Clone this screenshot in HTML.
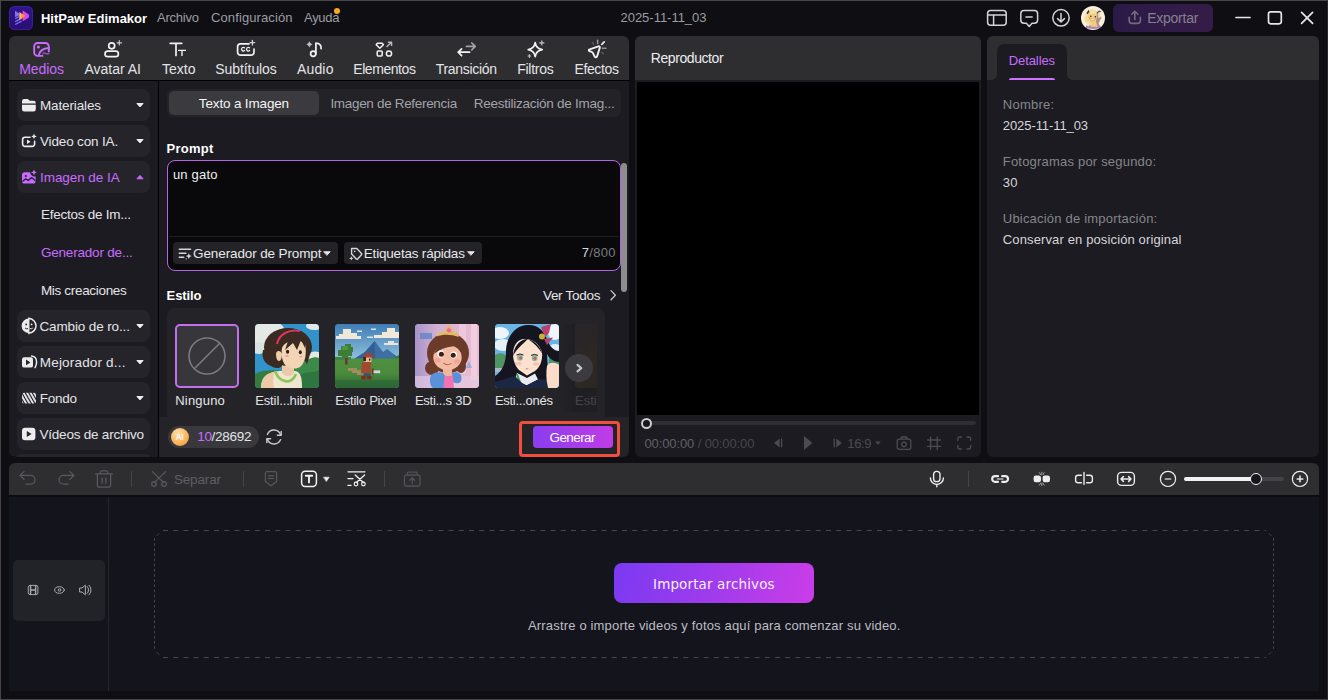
<!DOCTYPE html>
<html lang="es">
<head>
<meta charset="utf-8">
<title>HitPaw Edimakor</title>
<style>
*{box-sizing:border-box;margin:0;padding:0}
html,body{width:1328px;height:700px;overflow:hidden;background:#0f0e13}
body{position:relative;font-family:"Liberation Sans","DejaVu Sans",sans-serif;font-size:14px;color:#e4e4e8}
.a{position:absolute}
.t{position:absolute;white-space:nowrap;line-height:20px;height:20px}
.c{transform:translateX(-50%)}
.g{color:#9c9ca2}
.p{color:#c76bff}
.b{font-weight:bold}
svg{position:absolute;overflow:visible}
.frame{left:0;top:0;width:1328px;height:700px;border:1px solid #47474b;border-right-color:#2a2a2e;pointer-events:none}
.hd{background:#2e2e31}
.bd{background:#1c1b21}
.item{left:17px;width:133px;height:32px;border-radius:8px;background:#25242a}
</style>
</head>
<body>
<!-- TITLE BAR -->
<div id="titlebar">
  <div class="a" style="left:9px;top:6px;width:24px;height:24px;border-radius:5.5px;background:linear-gradient(180deg,#30178c,#280f70);box-shadow:inset 0 0 0 1px rgba(72,40,190,.55)"></div>
  <svg id="logo" style="left:0;top:0" width="40" height="36" viewBox="0 0 40 36">
    <defs>
      <linearGradient id="lgo" x1="0" x2="1" y1="0" y2="0"><stop offset="0" stop-color="#ffc94a"/><stop offset="1" stop-color="#ff7a1a"/></linearGradient>
      <linearGradient id="lgm" x1="0" x2="1" y1="0" y2="0"><stop offset="0" stop-color="#ff45d0"/><stop offset="1" stop-color="#b04bff"/></linearGradient>
    </defs>
    <path d="M15 10.800 L19.300 13.400 V15.600 L15 17z" fill="#8470ff"/>
    <path d="M15.200 18.700 L19.200 16.600 M15.200 21.600 L21.600 18.300 M15.200 24.500 L21.600 21.200" stroke="#7d6bff" stroke-width="1.400" fill="none"/>
    <path d="M22.600 10.600 L29 14.400 V17.600 L22.600 21.200z" fill="url(#lgm)"/>
    <path d="M19.300 12 L25.400 16 L19.300 20z" fill="url(#lgo)"/>
  </svg>
  <div class="t b" style="left:40.9px;top:8.500px;font-size:13px;color:#fff">HitPaw Edimakor</div>
  <div class="t g" style="left:157px;top:8px;font-size:13px;letter-spacing:-0.23px">Archivo</div>
  <div class="t g" style="left:211px;top:8px;font-size:13px;letter-spacing:0.11px">Configuración</div>
  <div class="t g" style="left:304px;top:8px;font-size:13px;letter-spacing:-0.29px">Ayuda</div>
  <div class="a" style="left:333.7px;top:7.800px;width:6px;height:6px;border-radius:3px;background:#f7a823"></div>
  <div class="t g c" style="left:663.49px;top:8px;font-size:13px;letter-spacing:-0.02px">2025-11-11_03</div>
  <div class="a" style="left:1113px;top:4px;width:100px;height:28px;border-radius:6px;background:linear-gradient(100deg,#2a1a47,#361c48)"></div>
  <div class="t" style="left:1147.2px;top:8px;font-size:14px;color:#87808f;letter-spacing:-0.25px">Exportar</div>
  <div class="a" style="left:1080.800px;top:5.600px;width:24.400px;height:24.400px;border-radius:12.200px;overflow:hidden;background:#f7f0dc">
    <svg width="24.400" height="24.400" viewBox="1080.800 5.600 24.400 24.400" style="left:0;top:0">
      <circle cx="1092.500" cy="17" r="8.200" fill="#f6dc9c" opacity="0.850"/>
      <circle cx="1088" cy="19" r="3.500" fill="#f5d88e" opacity="0.700"/>
      <path d="M1085 27.600 l1.600 -3 1.400 1.400 1 -1.200 8 0.200 1.600 -1 1.800 1.800 0.600 1.800 c-4 1.200 -12 1.200 -16 0z" fill="#9b72b9" opacity="0.850"/>
      <path d="M1088.600 9.400 l-2.200 2.600 0.600 2.200 2.400 -2.400z" fill="#4a3a58"/>
      <path d="M1096.400 12.200 l2.600 -2 2.200 1 -1 0.600 -1.800 -0.200 -0.800 2.600z" fill="#5a3f78"/>
      <path d="M1089 11 l1.600 3 c2 -1 3.600 -1 5.400 -0.400 l1.200 -1 c0.800 2.400 1 4.400 0.400 6.200 l2.600 -1.600 1 1 -2.200 2.400 0.800 0.400 -1.600 1.600 c0.400 1.600 0.200 2.800 -0.600 3.800 h-6.600 c-1 -1.400 -1.200 -3 -0.400 -4.800 c-2.200 -1.400 -3.200 -3.600 -2.800 -6z" fill="#f2ce78"/>
      <path d="M1096.400 13 c0.600 2.400 0.400 5 -0.600 8 l1.200 4.400 1.200 0.200 c0.600 -1 0.600 -2.400 0.200 -3.800 l1.600 -1.600 -0.800 -0.400 2.200 -2.400 -1 -1 -2.600 1.600 c0.400 -1.800 0.200 -3.600 -0.400 -5.600z" fill="#7a5a9a" opacity="0.550"/>
      <circle cx="1090.600" cy="15.800" r="0.800" fill="#2e2430"/>
      <circle cx="1095.200" cy="16.400" r="0.800" fill="#2e2430"/>
      <circle cx="1089.400" cy="17.800" r="0.800" fill="#ee8a4a"/>
      <circle cx="1095.800" cy="18.400" r="0.800" fill="#ee8a4a"/>
      <path d="M1090.600 18.400 h4 v1.800 h-4z" fill="#f6ecd2" stroke="#8a6a6a" stroke-width="0.300"/>
    </svg>
  </div>
  <svg id="tbicons" style="left:0;top:0" width="1328" height="36" viewBox="0 0 1328 36" fill="none" stroke="#d3d3d7" stroke-width="1.500" stroke-linecap="round" stroke-linejoin="round">
    <rect x="987.600" y="10.600" width="18.600" height="14.600" rx="3"/>
    <path d="M987.600 14.900 H1006.200 M993.600 14.900 V25.200"/>
    <path d="M1024 10.500 h10.400 a3.200 3.200 0 0 1 3.200 3.200 v6.400 a3.200 3.200 0 0 1 -3.200 3.200 h-2.400 l-2.800 3.200 -2.800 -3.200 h-2.400 a3.200 3.200 0 0 1 -3.200 -3.200 v-6.400 a3.200 3.200 0 0 1 3.200 -3.200z"/>
    <path d="M1026 17 h6.200"/>
    <circle cx="1061" cy="17.800" r="8.200"/>
    <path d="M1061 13.400 v8.400 M1057.600 18.600 l3.400 3.400 3.400 -3.400"/>
    <g stroke="#736c7c" stroke-width="1.600">
      <path d="M1134.800 19.400 v-8 M1131.800 14.200 l3 -3 3 3"/>
      <path d="M1129.200 17.200 v3.200 a3 3 0 0 0 3 3 h5.200 a3 3 0 0 0 3 -3 v-3.200"/>
    </g>
    <g stroke="#e6e6ea" stroke-width="1.700">
      <path d="M1236 17.500 h14"/>
      <rect x="1268.500" y="11.800" width="12.800" height="12" rx="2.200"/>
      <path d="M1301.600 12.400 l11 11 M1312.600 12.400 l-11 11"/>
    </g>
  </svg>
</div>

<!-- LEFT PANEL -->
<div id="left">
  <div class="a" style="left:9px;top:78px;width:620px;height:379px;background:#000;border-radius:0 0 6px 6px"></div>
  <div class="a hd" style="left:9px;top:36px;width:620px;height:44px;border-radius:6px 6px 0 0"></div>

  <div class="t c p" style="left:41.55px;top:59px;letter-spacing:-0.09px">Medios</div>
  <div class="t c" style="left:112.69px;top:59px;letter-spacing:-0.03px">Avatar AI</div>
  <div class="t c" style="left:178.71px;top:59px;letter-spacing:0.03px">Texto</div>
  <div class="t c" style="left:246.06px;top:59px;letter-spacing:-0.09px">Subtítulos</div>
  <div class="t c" style="left:315.28px;top:59px;letter-spacing:0.17px">Audio</div>
  <div class="t c" style="left:384.38px;top:59px;letter-spacing:-0.44px">Elementos</div>
  <div class="t c" style="left:466.25px;top:59px;letter-spacing:-0.31px">Transición</div>
  <div class="t c" style="left:535.38px;top:59px;letter-spacing:-0.24px">Filtros</div>
  <div class="t c" style="left:596.53px;top:59px;letter-spacing:-0.35px">Efectos</div>
  <svg id="tabicons" style="left:0;top:0" width="1328" height="100" viewBox="0 0 1328 100" fill="none" stroke="#f2f2f4" stroke-width="1.7" stroke-linecap="round" stroke-linejoin="round">
    <!-- Medios -->
    <g stroke="#c76bff" stroke-width="1.900">
      <path d="M48.800 51.400 V46.500 a3.500 3.500 0 0 0 -3.500 -3.500 H37.700 a3.500 3.500 0 0 0 -3.500 3.500 v5.900 a3.500 3.500 0 0 0 3.500 3.500 H42.500"/>
      <circle cx="38.400" cy="47.100" r="1.500" fill="#c76bff" stroke="none"/>
      <path d="M38.700 55.600 C39.500 51 43 48.300 49 48"/>
      <path d="M42.900 53.700 c1.400 -1 2.500 -0.700 3.300 -0.100 c0.800 0.500 1.700 0.300 2.500 0" stroke-width="1.600" opacity="0.600"/>
    </g>
    <!-- Avatar -->
    <circle cx="111.7" cy="45.8" r="3"/>
    <rect x="105" y="51.2" width="13.4" height="5.4" rx="2.7"/>
    <path d="M119.3 40.6 v4.4 M117.1 42.8 h4.4" stroke-width="1.2" stroke="#c9c9cd"/>
    <!-- Texto -->
    <path d="M170.2 43.3 H181.8 M176 43.3 V55.4"/>
    <path d="M178.6 50.4 H185.4 M182 50.4 V55.4" stroke-width="1.4"/>
    <!-- Subtitulos -->
    <path d="M249 43.8 H240.6 a3 3 0 0 0 -3 3 v5.4 a3 3 0 0 0 3 3 H251 a3 3 0 0 0 3 -3 V49"/>
    <path d="M244.6 47.9 a1.8 1.8 0 1 0 0 2.6 M249.6 47.9 a1.8 1.8 0 1 0 0 2.6" stroke-width="1.2"/>
    <path d="M252.4 40.3 v4.6 M250.1 42.6 h4.6" stroke-width="1.3" stroke="#d4d4d8"/>
    <!-- Audio -->
    <circle cx="313.2" cy="53.8" r="2.6"/>
    <path d="M315.9 53.6 V43.2 c3.5 0 5.6 2 5.2 5.4"/>
    <path d="M309.4 41.2 l1.1 2 2 1.1 -2 1.1 -1.1 2 -1.1 -2 -2 -1.1 2 -1.1z" fill="#c2c2c6" stroke="none"/>
    <!-- Elementos -->
    <path d="M377.4 43.2 h4.8 l1.2 1.6 -3.6 3.4 -3.6 -3.4z" stroke-width="1.5"/>
    <rect x="377.2" y="51" width="5" height="5" rx="1" stroke-width="1.5"/>
    <circle cx="389" cy="53.5" r="2.6" stroke-width="1.5"/>
    <path d="M387 46.6 l4.6 -4.4 M388.4 42.2 h3.2 v3.2" stroke="#b9b9be" stroke-width="1.4"/>
    <!-- Transicion -->
    <path d="M466.5 46.4 H475.2 M471.8 43 l3.4 3.4 -3.4 3.4" stroke="#a2a2a7"/>
    <path d="M469.6 52.2 H458.2 M461.6 48.8 l-3.400 3.400 3.400 3.400"/>
    <!-- Filtros -->
    <path d="M535.2 42.6 c0.7 4.4 2.6 6.3 7 7 c-4.4 0.7 -6.3 2.6 -7 7 c-0.7 -4.4 -2.6 -6.300 -7 -7 c4.400 -0.7 6.3 -2.6 7 -7z"/>
    <path d="M541.8 40.8 v4.200 M539.7 42.9 h4.200" stroke-width="1.2" stroke="#c4c4c8"/>
    <path d="M529.4 54.600 v2.800 M528 56 h2.800" stroke-width="1.100" stroke="#c4c4c8"/>
    <!-- Efectos -->
    <path d="M589.7 49.3 L598.4 46.4 c1 -0.3 1.7 0.4 1.4 1.4 L597.1 56.3 c-0.4 1.2 -1.8 1.400 -2.400 0.300 L593 53.1 c-0.3 -0.6 -0.8 -1 -1.4 -1.2 l-2.100 -0.800 c-1.100 -0.400 -1 -1.500 0.200 -1.800z" stroke-width="1.900"/>
    <path d="M597.6 40.3 v3.300" stroke-width="1.500" stroke="#9c9ca1"/>
    <path d="M604.2 41.9 l-2.400 2.400" stroke-width="1.800" stroke="#e6e6ea"/>
    <path d="M602.2 48.2 h3.800" stroke-width="1.500" stroke="#8f8f94"/>
    <path d="M592.4 42.500 l1.400 1.800 M601.8 52.300 l1.800 1.400" stroke-width="1.300" stroke="#5c5c61"/>
  </svg>
  <div class="a bd" style="left:9px;top:81px;width:149px;height:376px;border-radius:0 0 0 6px"></div>
  <div class="a bd" style="left:159px;top:81px;width:470px;height:376px;border-radius:0 0 6px 0"></div>
  <div id="sidebar">
    <div class="a item" style="top:89px"></div>
    <div class="a item" style="top:125px"></div>
    <div class="a item" style="top:161px"></div>
    <div class="a item" style="top:310px"></div>
    <div class="a item" style="top:346px"></div>
    <div class="a item" style="top:382px"></div>
    <div class="a item" style="top:418px"></div>
    <div class="a item" style="top:454px;height:3px;border-radius:8px 8px 0 0"></div>
    <div class="t" style="left:40px;top:96px;font-size:13.500px;letter-spacing:-0.14px">Materiales</div>
    <div class="t" style="left:40px;top:132px;font-size:13.500px;letter-spacing:-0.16px">Video con IA.</div>
    <div class="t p" style="left:40px;top:168px;font-size:13.500px;letter-spacing:-0.06px">Imagen de IA</div>
    <div class="t" style="left:40.9px;top:205px;font-size:13.500px;letter-spacing:-0.24px">Efectos de Im...</div>
    <div class="t p" style="left:40.9px;top:243px;font-size:13.500px;letter-spacing:-0.19px">Generador de...</div>
    <div class="t" style="left:40.9px;top:281px;font-size:13.500px;letter-spacing:-0.32px">Mis creaciones</div>
    <div class="t" style="left:39.5px;top:317px;font-size:13.500px;letter-spacing:-0.13px">Cambio de ro...</div>
    <div class="t" style="left:39.8px;top:353px;font-size:13.500px;letter-spacing:0.18px">Mejorador d...</div>
    <div class="t" style="left:39.8px;top:389px;font-size:13.500px;letter-spacing:-0.27px">Fondo</div>
    <div class="t" style="left:39.5px;top:425px;font-size:13.500px;letter-spacing:-0.22px">Vídeos de archivo</div>
    <svg id="sideicons" style="left:0;top:0" width="160" height="460" viewBox="0 0 160 460" fill="#ececee" stroke="none">
      <!-- folder -->
      <path d="M22 101.200 a2.200 2.200 0 0 1 2.200 -2.200 h3.600 l2 1.800 h3.800 a2.200 2.200 0 0 1 2.200 2.200 v0.600 H22z M22 104.800 H35.800 v4.400 a2.200 2.200 0 0 1 -2.200 2.200 H24.200 a2.200 2.200 0 0 1 -2.200 -2.200z"/>
      <!-- carets -->
      <path d="M136.900 103.500 h6.200 l-3.100 3.400z M136.900 139.500 h6.200 l-3.100 3.400z M136.900 324.500 h6.200 l-3.100 3.400z M136.900 360.500 h6.200 l-3.100 3.400z M136.900 396.500 h6.200 l-3.100 3.400z" stroke="#ececee" stroke-width="1" stroke-linejoin="round"/>
      <path d="M136.900 178.800 h6.200 l-3.100 -3.400z" fill="#c76bff" stroke="#c76bff" stroke-width="1" stroke-linejoin="round"/>
      <!-- video AI -->
      <g fill="none" stroke="#ececee" stroke-width="1.600" stroke-linecap="round" stroke-linejoin="round">
        <path d="M30 137.200 H25 a2.400 2.400 0 0 0 -2.400 2.400 v4.400 a2.400 2.400 0 0 0 2.400 2.400 h7.200 a2.400 2.400 0 0 0 2.400 -2.400 V141.400"/>
      </g>
      <path d="M27 139.600 l3.600 2.200 -3.600 2.200z"/>
      <path d="M34 133.600 l0.800 2 2 0.800 -2 0.800 -0.800 2 -0.800 -2 -2 -0.800 2 -0.800z"/>
      <!-- image AI -->
      <g fill="#c76bff">
        <path d="M24.600 172.200 H30 a5 5 0 0 0 4 4.200 l1.600 0 v4.600 a2.600 2.600 0 0 1 -2.600 2.600 H24.600 a2.600 2.600 0 0 1 -2.600 -2.600 v-6.200 a2.600 2.600 0 0 1 2.600 -2.600z"/>
        <path d="M34 169.400 l0.900 2.100 2.100 0.900 -2.100 0.900 -0.900 2.100 -0.900 -2.100 -2.100 -0.900 2.100 -0.900z"/>
      </g>
      <circle cx="25.800" cy="176" r="1.100" fill="#232228"/>
      <path d="M22.400 181.600 l3.400 -2.800 2.400 1.800 3.400 -3 3.800 3.200" fill="none" stroke="#232228" stroke-width="1.300" stroke-linejoin="round"/>
      <!-- face swap -->
      <path d="M28.800 318.600 a7.200 7.200 0 0 0 0 14.400z"/>
      <path d="M28.800 318.600 a7.200 7.200 0 0 1 0 14.400" fill="none" stroke="#ececee" stroke-width="1.500"/>
      <path d="M28.800 317.400 v16.800" stroke="#ececee" stroke-width="1.300"/>
      <circle cx="26.200" cy="324.400" r="0.900" fill="#232228"/>
      <circle cx="31.600" cy="324.400" r="0.900"/>
      <path d="M25 328 q1.600 1.400 3 0.600" fill="none" stroke="#232228" stroke-width="1"/>
      <path d="M29.800 328.600 q1.600 0.600 3 -0.600" fill="none" stroke="#ececee" stroke-width="1"/>
      <!-- enhancer -->
      <path d="M24.200 357.200 h6.600 a2.200 2.200 0 0 1 2.200 2.200 v6 a2.200 2.200 0 0 1 -2.200 2.200 h-6.600 a2.200 2.200 0 0 1 -2.200 -2.200 v-6 a2.200 2.200 0 0 1 2.200 -2.200z M26 359.600 v5.600 l4.400 -2.800z" fill-rule="evenodd"/>
      <path d="M31.600 356 c3.400 0.400 5 3 5 6.200 c0 2 -0.600 3.800 -1.600 5.400" fill="none" stroke="#ececee" stroke-width="1.500" stroke-linecap="round"/>
      <!-- fondo -->
      <clipPath id="fc"><rect x="22" y="392.800" width="14" height="10.600" rx="2"/></clipPath>
      <g fill="none" stroke="#e4e4e8" stroke-width="1.900" clip-path="url(#fc)">
        <path d="M12.0 391 l8 14 M15.5 391 l8 14 M19.0 391 l8 14 M22.5 391 l8 14 M26.0 391 l8 14 M29.5 391 l8 14 M33.0 391 l8 14 M36.5 391 l8 14"/>
      </g>
      <!-- stock video -->
      <path d="M25 427.800 h7.400 a3 3 0 0 1 3 3 v6.400 a3 3 0 0 1 -3 3 h-7.400 a3 3 0 0 1 -3 -3 v-6.400 a3 3 0 0 1 3 -3z M26.800 431 v6 l4.800 -3z" fill-rule="evenodd"/>
    </svg>
  </div>

</div>


  <div id="content">
    <div class="a" style="left:167px;top:89px;width:454px;height:28px;border-radius:6px;background:#232227"></div>
    <div class="a" style="left:169px;top:91px;width:150px;height:24px;border-radius:5px;background:#3b3b3f"></div>
    <div class="t c" style="left:243.92px;top:93.500px;font-size:13.500px;color:#f4f4f6;letter-spacing:-0.16px">Texto a Imagen</div>
    <div class="t c" style="left:393.64px;top:93.500px;font-size:13.500px;color:#a3a3a9;letter-spacing:-0.32px">Imagen de Referencia</div>
    <div class="t c" style="left:544.17px;top:93.500px;font-size:13.500px;color:#a3a3a9;letter-spacing:-0.25px">Reestilización de Imag...</div>
    <div class="t b" style="left:166.6px;top:138.500px;font-size:13px;color:#fff;letter-spacing:0.26px">Prompt</div>
    <div class="a" style="left:167px;top:160px;width:454px;height:110.7px;border-radius:8px;border:1.3px solid #b464e2;background:#09090b"></div>
    <div class="a" style="left:169px;top:236px;width:450px;height:1px;background:#1f1f23"></div>
    <div class="t" style="left:172.9px;top:165px;font-size:13px;color:#eeeef0;letter-spacing:0.22px">un gato</div>
    <div class="a" style="left:173px;top:242px;width:165px;height:22px;border-radius:4px;background:#232327"></div>
    <div class="a" style="left:344px;top:242px;width:138px;height:22px;border-radius:4px;background:#232327"></div>
    <div class="t" style="left:193.1px;top:244px;font-size:13.500px;color:#e8e8ea;letter-spacing:-0.12px">Generador de Prompt</div>
    <div class="t" style="left:363.8px;top:244px;font-size:13.500px;color:#e8e8ea;letter-spacing:-0.2px">Etiquetas rápidas</div>
    <div class="t" style="left:581.8px;top:243px;font-size:13px;color:#7a7a80;letter-spacing:0.26px"><span style="color:#d8d8dc">7</span>/800</div>
    <div class="a" style="left:621.200px;top:162.500px;width:5.600px;height:129.500px;border-radius:3px;background:#8d8d90"></div>
    <div class="t b" style="left:166.6px;top:285.500px;font-size:13px;color:#fff;letter-spacing:-0.12px">Estilo</div>
    <div class="t" style="left:542.9px;top:286px;font-size:13.500px;color:#e6e6e8;letter-spacing:-0.27px">Ver Todos</div>
    <div class="a" style="left:159px;top:416.5px;width:470px;height:40.5px;border-radius:0 0 6px 0;background:#242328"></div>
    <div class="a" style="left:167px;top:308px;width:438px;height:110px;border-radius:8px 8px 0 0;background:#242328"></div>
    <div class="a" style="left:175px;top:324px;width:64px;height:64px;border-radius:5px;border:2px solid #c270f0;background:#37363b"></div>
    <div class="t" style="left:175.3px;top:390.500px;font-size:13px;letter-spacing:0.18px">Ninguno</div>
    <div class="t" style="left:255.2px;top:390.500px;font-size:13px;letter-spacing:-0.12px">Estil...hibli</div>
    <div class="t" style="left:335.3px;top:390.500px;font-size:13px;letter-spacing:-0.22px">Estilo Pixel</div>
    <div class="t" style="left:414.9px;top:390.500px;font-size:13px;letter-spacing:-0.26px">Esti...s 3D</div>
    <div class="t" style="left:494.9px;top:390.500px;font-size:13px;letter-spacing:-0.27px">Esti...onés</div>
    <div class="t" style="left:575px;top:390.500px;font-size:13px;width:22px;overflow:hidden">Esti...</div>

    <div class="a" style="left:255px;top:324px;width:64px;height:64px;border-radius:4px;overflow:hidden;background:#2f93c8">
      <svg width="64" height="64" viewBox="0 0 64 64" style="left:0;top:0">
        <rect width="64" height="64" fill="#3193c9"/>
        <ellipse cx="12" cy="10" rx="19" ry="14" fill="#e4e9e6"/>
        <ellipse cx="4" cy="24" rx="8" ry="6" fill="#d9e2e2"/>
        <ellipse cx="59" cy="2" rx="8" ry="4" fill="#dfe8ea"/>
        <ellipse cx="60" cy="33" rx="8" ry="5.500" fill="#e2e8e6"/>
        <path d="M36 44 C42 36 50 38 54 35 C58 33 62 33 64 34 V64 H36z" fill="#3c8a4a"/>
        <path d="M44 52 C50 46 58 50 64 46 V64 H44z" fill="#2f7540"/>
        <path d="M0 50 C8 45 16 47 24 46 V64 H0z" fill="#357c41"/>
        <path d="M6 64 C6 52 14 48 24 47 H40 C46 48 47 54 47 64z" fill="#efe6d0"/>
        <path d="M6 64 C6 53 12 49 19 48 C18 54 18 60 19 64z" fill="#eccaa7"/>
        <path d="M27 40 h12 v9 c-2 4 -10 4 -12 0z" fill="#eccaa7"/>
        <path d="M20 47 C24 58 36 62 41 50" fill="none" stroke="#8fc458" stroke-width="2.600"/>
        <ellipse cx="33" cy="23" rx="24" ry="19" fill="#3a2a22"/>
        <path d="M8 26 C6 34 10 40 16 42 C22 46 28 44 28 38 V24z" fill="#3a2a22"/>
        <path d="M50 18 c6 4 6 12 2 22 l-4 -6z" fill="#3a2a22"/>
        <path d="M27 24 C30 16 44 14 50 20 C52 30 50 38 46 42 C42 46 34 45 30 41 C27 37 26 30 27 24z" fill="#f3d5b5"/>
        <path d="M21 30 c0 -4 5 -4 6 0 c0 4 -1 7 -3 7 c-2 0 -3 -3 -3 -7z" fill="#efcdaa"/>
        <path d="M34 14 L30 26 L38 19 L42 26 L46 16 L50 24 L50 14z" fill="#3a2a22"/>
        <path d="M22 20 C24 10 34 5 45 7" fill="none" stroke="#d7365e" stroke-width="2"/>
        <ellipse cx="32.600" cy="27.800" rx="1.600" ry="2" fill="#2a1e1c"/>
        <ellipse cx="45.300" cy="28.200" rx="1.500" ry="2" fill="#2a1e1c"/>
        <ellipse cx="32" cy="32" rx="2" ry="1" fill="#f2a3a0"/>
        <ellipse cx="45.800" cy="32.600" rx="1.800" ry="0.900" fill="#f2a3a0"/>
      </svg>
    </div>
    <div class="a" style="left:335px;top:324px;width:64px;height:64px;border-radius:4px;overflow:hidden;background:#4a8fc0">
      <svg width="64" height="64" viewBox="0 0 64 64" style="left:0;top:0">
        <defs><linearGradient id="psky" x1="0" x2="0" y1="0" y2="1"><stop offset="0" stop-color="#3f7db6"/><stop offset="0.550" stop-color="#8fc0dc"/><stop offset="1" stop-color="#8fc0dc"/></linearGradient>
        <linearGradient id="pgr" x1="0" x2="0" y1="0" y2="1"><stop offset="0" stop-color="#4f9040"/><stop offset="0.500" stop-color="#4a8a3c"/><stop offset="1" stop-color="#2c6636"/></linearGradient></defs>
        <rect width="64" height="64" fill="url(#psky)"/>
        <path d="M1 15 h25 v-3 h-4 v-3 h-6 v-4 h-8 v5 h-4 v2 h-3z" fill="#f0e9da"/>
        <path d="M39 14 h25 v-6 h-4 v-4 h-8 v4 h-5 v3 h-8z" fill="#f0e9da"/>
        <path d="M49 21 h14 v-2 h-4 v-2 h-6 v2 h-4z" fill="#e8e4da"/>
        <path d="M22 8 h5 v-1.500 h-5z M36 6 h5 v-1.500 h-5z M32 14 h6 v-1.500 h-6z" fill="#d6e4ea"/>
        <path d="M16 37 L30 28 L39.700 17 L48 28 L52 25 L64 34 V38 H16z" fill="#3f6ea2"/>
        <path d="M16 37 L30 28 L39.700 17 L40 38z" fill="#335f92"/>
        <path d="M54 36 L64 31 V40 H54z" fill="#3a7a45"/>
        <rect y="34.500" width="64" height="29.500" fill="url(#pgr)"/>
        <path d="M0 33 h16 v3 h-16z" fill="#45823f"/>
        <path d="M13 44 h9 v2 h4 v3 h4 v2 h-8 v-2 h-5 v-2 h-4z" fill="#a08c5e"/>
        <rect x="10" y="31" width="2.600" height="9.500" fill="#6a3a2a"/>
        <path d="M3 26 h3 v-4 h4 v-2 h6 v3 h2 v5 h-1 v4 h-4 v2 h-6 v-2 h-4z" fill="#3d7d36"/>
        <path d="M7 22 h6 v4 h-6z" fill="#4f9340"/>
        <path d="M28.400 33.500 v-3 h2 v-1.200 h6 v2 h2.300 v2.200z" fill="#a8402f"/>
        <rect x="29.500" y="33.500" width="7" height="4.600" fill="#e8b890"/>
        <rect x="28.400" y="33" width="2.500" height="4" fill="#2a1c1c"/>
        <rect x="34" y="34.600" width="1.300" height="2" fill="#1c1414"/>
        <path d="M27 38 h9 v11.500 h-9.500 v-8z" fill="#a04a2f"/>
        <rect x="28.500" y="49.500" width="7" height="3" fill="#35507a"/>
        <path d="M26.300 52 h4.500 v3.600 h-4.500z M31.800 52 h4.800 v3.600 h-4.800z" fill="#7a3020"/>
        <rect x="37" y="44.500" width="1.600" height="6" fill="#7a3020"/>
        <rect x="38.600" y="46.400" width="6.600" height="2.800" fill="#cfd6de"/>
        <path d="M0 56 h64 v8 h-64z" fill="#2c6636" opacity="0.600"/>
      </svg>
    </div>
    <div class="a" style="left:415px;top:324px;width:64px;height:64px;border-radius:4px;overflow:hidden;background:#d8b0d0">
      <svg width="64" height="64" viewBox="0 0 64 64" style="left:0;top:0">
        <defs><linearGradient id="dbg" x1="0" x2="1" y1="0" y2="0"><stop offset="0" stop-color="#a993c9"/><stop offset="0.350" stop-color="#d3b1d3"/><stop offset="1" stop-color="#ebbdd3"/></linearGradient></defs>
        <rect width="64" height="64" fill="url(#dbg)"/>
        <rect x="44" y="0" width="7" height="50" fill="#f2cfe0" opacity="0.700"/>
        <rect x="56" y="0" width="6" height="56" fill="#f4d6e4" opacity="0.700"/>
        <rect x="5" y="9" width="12" height="6" fill="#5f86c4" opacity="0.800"/>
        <rect x="0" y="52" width="64" height="12" fill="#e6cfe6" opacity="0.600"/>
        <path d="M51 44 l3 -7 3 7z" fill="#8fa6d6" opacity="0.800"/>
        <ellipse cx="33" cy="29" rx="21" ry="20" fill="#6b3a29"/>
        <ellipse cx="17" cy="44" rx="7" ry="7" fill="#6b3a29"/>
        <ellipse cx="46" cy="42" rx="5" ry="7" fill="#6b3a29"/>
        <path d="M21.700 12.400 L24 8 L28 9 L34 0.600 L40 9 L43 8.600 L43.600 13 C36 10 28 10 21.700 12.400z" fill="#e2bb63"/>
        <circle cx="34" cy="6.400" r="2.100" fill="#ef5fae"/>
        <rect x="28" y="44" width="9" height="9" fill="#efb59c"/>
        <ellipse cx="32.500" cy="33.500" rx="14.200" ry="12.600" fill="#f2bca4"/>
        <path d="M19 30 C22 20 34 16 42 22 C36 22 26 24 19 30z" fill="#6b3a29"/>
        <ellipse cx="25.800" cy="30" rx="3.400" ry="3.700" fill="#fff"/>
        <ellipse cx="38.600" cy="31" rx="3.300" ry="3.600" fill="#fff"/>
        <circle cx="26.400" cy="30.300" r="2.500" fill="#3d1e16"/>
        <circle cx="38.200" cy="31.300" r="2.500" fill="#3d1e16"/>
        <ellipse cx="22.500" cy="36.500" rx="3.200" ry="2.200" fill="#f29a98" opacity="0.700"/>
        <ellipse cx="42" cy="37.500" rx="3" ry="2.200" fill="#f29a98" opacity="0.700"/>
        <path d="M28.500 39 q4 3.200 8 0.400" fill="none" stroke="#c9625e" stroke-width="1.100"/>
        <path d="M15 55 C15 49 22 47 28 49 L31 53 L30 64 H18 C15 62 15 58 15 55z" fill="#5b91d9"/>
        <path d="M37 49 C42 47 47 49 46.500 55 C46 60 42 60 38 58z" fill="#5b91d9"/>
        <path d="M29.500 52 h8.500 l1 12 h-10.500z" fill="#f173b3"/>
      </svg>
    </div>
    <div class="a" style="left:495px;top:324px;width:64px;height:64px;border-radius:4px;overflow:hidden;background:#6ab8e8">
      <svg width="64" height="64" viewBox="0 0 64 64" style="left:0;top:0">
        <rect width="64" height="64" fill="#69b6e6"/>
        <ellipse cx="5" cy="9" rx="9" ry="6" fill="#eef5fa"/>
        <ellipse cx="8" cy="21" rx="9" ry="6" fill="#e6f1f8"/>
        <ellipse cx="60" cy="8" rx="7" ry="8" fill="#f1f6fa"/>
        <ellipse cx="60" cy="24" rx="6" ry="4" fill="#e6f0f6"/>
        <path d="M0 31 C4 28 9 29 12 32 V46 H0z" fill="#4f9463"/>
        <path d="M54 31 C58 29 62 30 64 32 V40 H54z" fill="#4f9463"/>
        <rect x="0" y="44" width="12" height="4" fill="#aab8c6"/>
        <path d="M11 30 C10 12 22 0 34 1 C44 1 50 8 53 18 C56 24 60 27 64 27 V38 C58 38 54 34 52 30 L54 64 H0 V52 C6 48 10 42 11 30z" fill="#15151f"/>
        <path d="M18 30 C18 20 24 14 31 15 C38 15 44 20 47 28 C48 38 44 44 40 47 L32 51.500 L24 46 C20 42 18 36 18 30z" fill="#fbe1ce"/>
        <path d="M18 32 C19 22 25 15 33 15 C28 20 22 24 18 32z M33 15 C40 17 45 22 47.500 30 C44 24 39 19 33 15z" fill="#15151f"/>
        <ellipse cx="25" cy="33.500" rx="2.900" ry="3.200" fill="#8fb6a6"/>
        <ellipse cx="39.600" cy="34" rx="2.900" ry="3.200" fill="#8fb6a6"/>
        <circle cx="25.600" cy="34" r="1.400" fill="#c85a4a"/>
        <circle cx="40" cy="34.400" r="1.400" fill="#c85a4a"/>
        <path d="M21.500 31 q3.500 -2 7 0 M36 31.400 q3.500 -2 7 0" fill="none" stroke="#22202a" stroke-width="1"/>
        <ellipse cx="23.500" cy="39.500" rx="3.200" ry="1.800" fill="#f6b5a8" opacity="0.700"/>
        <ellipse cx="41" cy="40" rx="3.200" ry="1.800" fill="#f6b5a8" opacity="0.700"/>
        <ellipse cx="32" cy="44.800" rx="1.600" ry="0.800" fill="#ea8f9c"/>
        <path d="M22 49 l10 5 8 -4.500 l3 6 l-11 6 l-12 -6z" fill="#e9ebef"/>
        <path d="M21 50 l3 10 l3 1 l-4 -11z" fill="#3f9a55"/>
        <path d="M0 58 L20 52 L30 62 L44 55 L52 56 V64 H0z" fill="#1c2746"/>
        <path d="M52 42 C54 38 60 38 64 41 V64 H53 C51 56 51 48 52 42z" fill="#fadcc8"/>
        <path d="M46 3 L56 0 L54 9 L50 13z" fill="#b8416f"/>
        <path d="M49 15 L58 13.500 L52 21z" fill="#b8416f"/>
        <circle cx="47" cy="12.400" r="3" fill="#c9b233"/>
      </svg>
    </div>
    <div class="a" style="left:575px;top:324px;width:22px;height:64px;border-radius:4px 0 0 4px;overflow:hidden;background:linear-gradient(135deg,#5a4a3a 30%,#7a5a20 60%,#6a5228)"></div>
    <div class="a" style="left:558px;top:324px;width:39px;height:87.5px;background:linear-gradient(90deg,rgba(30,29,34,0),rgba(30,29,34,.8) 42%,rgba(30,29,34,.82))"></div>
    <div class="a" style="left:565px;top:354px;width:28px;height:28px;border-radius:14px;background:#3b3b3f"></div>
    <div class="a" style="left:167.5px;top:426px;width:91px;height:22px;border-radius:11px;background:#39393d"></div>
    <div class="a" style="left:171px;top:428px;width:18px;height:18px;border-radius:9px;background:radial-gradient(circle at 38% 30%,#ffdfae,#fbb55c 55%,#f29a3a 85%,#e98f34)"></div>
    <div class="t" style="left:175.4px;top:427px;font-size:8.5px;font-weight:bold;color:#fffaf0;letter-spacing:-0.2px">AI</div>
    <div class="t" style="left:197.2px;top:427px;font-size:13.500px;color:#e4e4e8;letter-spacing:-0.3px"><span class="p">10</span>/28692</div>
    <div class="a" style="left:533px;top:426px;width:80px;height:22px;border-radius:4px;background:linear-gradient(90deg,#8a3df0,#c03ce6)"></div>
    <div class="t c" style="left:572.22px;top:427.500px;font-size:13.500px;color:#fff;letter-spacing:-0.57px">Generar</div>
    <div class="a" style="left:519px;top:421px;width:101px;height:36px;border:3px solid #f04f3f;border-radius:4px"></div>
    <svg id="cicons" style="left:0;top:0" width="640" height="460" viewBox="0 0 640 460" fill="none" stroke="#d6d6da" stroke-width="1.400" stroke-linecap="round" stroke-linejoin="round">
      <path d="M179.300 249.200 h11.200 M179.300 253.300 h6.600 M179.300 257.300 h4.400" stroke-width="1.500"/>
      <path d="M188.800 253.200 l0.900 2 2 0.900 -2 0.900 -0.900 2 -0.900 -2 -2 -0.900 2 -0.900z" fill="#d6d6da" stroke="none"/><circle cx="186.200" cy="258.800" r="0.600" fill="#d6d6da" stroke="none"/>
      <path d="M324 251.700 h6.200 l-3.100 3.400z M468 251.700 h6.200 l-3.100 3.400z" fill="#e8e8ea" stroke="#e8e8ea" stroke-width="0.900" stroke-linejoin="round"/>
      <path d="M351.600 248.500 h5.200 l4.700 5 a0.900 0.900 0 0 1 0 1.200 l-3.900 4.200 a0.900 0.900 0 0 1 -1.300 0 l-4.700 -4.900z"/>
      <circle cx="354.700" cy="251.400" r="0.800" fill="#d6d6da" stroke="none"/>
      <path d="M351.300 256.200 l0.700 1.500 1.500 0.700 -1.500 0.700 -0.700 1.500 -0.700 -1.500 -1.500 -0.700 1.500 -0.700z" fill="#d6d6da" stroke="none"/>
      <path d="M611 290.600 l4.400 4.600 -4.400 4.600" stroke="#c8c8cc" stroke-width="1.300"/>
      <circle cx="207" cy="356" r="18" stroke="#7b7a7f" stroke-width="1.600"/>
      <path d="M194.300 368.700 L219.700 343.300" stroke="#7b7a7f" stroke-width="1.600"/>
      <path d="M577.500 364.900 l3.700 3.200 -3.700 3.200" stroke="#c6c6ca" stroke-width="2.200"/>
      <g stroke="#cbcbcf" stroke-width="1.400">
        <path d="M267.400 434.400 a7 7 0 0 1 13.200 0.600 M280.600 439.600 a7 7 0 0 1 -13.200 -0.600"/>
        <path d="M281.200 431.400 v3.800 h-3.800 M266.800 442.600 v-3.800 h3.800"/>
      </g>
    </svg>
  </div>
<!-- PLAYER -->
<div id="player">
  <div class="a bd" style="left:635px;top:36px;width:346px;height:421px;border-radius:6px"></div>
  <div class="a hd" style="left:635px;top:36px;width:346px;height:44px;border-radius:6px 6px 0 0"></div>
  <div class="t" style="left:650.8px;top:48px;font-size:14px;color:#ececf0;letter-spacing:-0.43px">Reproductor</div>
  <div class="a" style="left:637px;top:82px;width:342px;height:333px;background:#000"></div>

  <div class="a" style="left:646px;top:421px;width:330px;height:4px;border-radius:2px;background:#2f2f33"></div>
  <div class="a" style="left:640.800px;top:417.800px;width:10.800px;height:10.800px;border-radius:6px;border:2.300px solid #cfcfd1;background:#17171b"></div>
  <div class="t" style="left:644.5px;top:433.500px;font-size:13px;color:#47474d;letter-spacing:-0.12px"><span style="color:#616167">00:00:00</span> / 00:00:00</div>
  <div class="t" style="left:847.3px;top:433.500px;font-size:13px;color:#4b4b51;letter-spacing:-0.37px">16:9</div>
  <svg id="picons" style="left:0;top:0" width="1000" height="460" viewBox="0 0 1000 460" fill="#4b4b51" stroke="none">
    <path d="M779.600 438.600 v8.800 l-5.600 -4.400z"/>
    <rect x="781" y="438.600" width="1.300" height="8.800"/>
    <path d="M804 436 v14 l8.400 -7z"/>
    <rect x="833.600" y="438.600" width="1.300" height="8.800"/>
    <path d="M836.300 438.600 v8.800 l5.600 -4.400z"/>
    <path d="M875.200 441.600 h5.600 l-2.800 3.200z"/>
    <g fill="none" stroke="#4b4b51" stroke-width="1.300" stroke-linejoin="round" stroke-linecap="round">
      <path d="M899.400 439.200 h9.200 a2.200 2.200 0 0 1 2.200 2.200 v5.800 a2.200 2.200 0 0 1 -2.200 2.200 h-9.200 a2.200 2.200 0 0 1 -2.200 -2.200 v-5.800 a2.200 2.200 0 0 1 2.200 -2.200z"/>
      <path d="M900.800 439 l1 -2 h4.400 l1 2" stroke-width="1.600"/>
      <circle cx="904" cy="444.400" r="2.200"/>
      <path d="M930.600 437 v12.400 M937.200 437 v12.400 M927.600 440 h12.800 M927.600 446.400 h12.800"/>
      <path d="M957.800 440.400 v-1.400 a2 2 0 0 1 2 -2 h1.600 M967 437 h1.600 a2 2 0 0 1 2 2 v1.400 M970.600 445.600 v1.400 a2 2 0 0 1 -2 2 h-1.600 M961.400 449 h-1.600 a2 2 0 0 1 -2 -2 v-1.400" stroke-dasharray="none"/>
    </g>
  </svg>
</div>

<!-- DETAILS -->
<div id="details">
  <div class="a bd" style="left:987px;top:36px;width:332px;height:421px;border-radius:6px"></div>
  <div class="a hd" style="left:987px;top:36px;width:332px;height:44px;border-radius:6px 6px 0 0"></div>

  <div class="a bd" style="left:997px;top:44px;width:70px;height:36px;border-radius:7px 7px 0 0"></div>
  <div class="a" style="left:991px;top:74px;width:6px;height:6px;background:radial-gradient(circle at 0 0,#2e2e31 5.500px,#1c1b21 6.200px)"></div>
  <div class="a" style="left:1067px;top:74px;width:6px;height:6px;background:radial-gradient(circle at 100% 0,#2e2e31 5.500px,#1c1b21 6.200px)"></div>
  <div class="t p" style="left:1008.7px;top:50.500px;font-size:13px;letter-spacing:-0.08px">Detalles</div>
  <div class="a" style="left:1009px;top:78px;width:46px;height:2px;border-radius:2px 2px 0 0;background:#cf70ff"></div>
  <div class="t" style="left:1002.8px;top:95px;font-size:13px;color:#85858b;letter-spacing:0.26px">Nombre:</div>
  <div class="t" style="left:1002.8px;top:116px;font-size:13px;color:#d6d6da;letter-spacing:-0.08px">2025-11-11_03</div>
  <div class="t" style="left:1002.8px;top:152px;font-size:13px;color:#85858b;letter-spacing:0.2px">Fotogramas por segundo:</div>
  <div class="t" style="left:1002.8px;top:173px;font-size:13px;color:#d6d6da;letter-spacing:0.23px">30</div>
  <div class="t" style="left:1002.8px;top:209px;font-size:13px;color:#85858b;letter-spacing:0.2px">Ubicación de importación:</div>
  <div class="t" style="left:1002.8px;top:230px;font-size:13px;color:#d6d6da;letter-spacing:0.13px">Conservar en posición original</div>
</div>

<!-- TIMELINE -->
<div id="timeline">
  <div class="a" style="left:9px;top:463px;width:1310px;height:228px;background:#14141d;border-radius:6px 6px 0 0"></div>
  <div class="a hd" style="left:9px;top:463px;width:1310px;height:32px;border-radius:6px 6px 0 0"></div>

  <div class="a" style="left:9px;top:495px;width:1310px;height:1.500px;background:#0c0c11"></div>
  <div class="a" style="left:108px;top:497px;width:1px;height:194px;background:#25252b"></div>
  <div class="a" style="left:13px;top:560px;width:92px;height:61px;border-radius:5px;background:#222329"></div>
  <div class="a" style="left:614px;top:563px;width:200px;height:40px;border-radius:8px;background:linear-gradient(105deg,#7a3af2,#a03bec 50%,#cb3de8)"></div>
  <div class="t c" style="left:713.87px;top:574px;font-size:13.500px;font-family:'DejaVu Sans','Liberation Sans',sans-serif;color:#f6effd;letter-spacing:0.13px">Importar archivos</div>
  <div class="t c" style="left:714.29px;top:615.500px;font-size:13px;color:#bdbdc3;letter-spacing:0.17px">Arrastre o importe videos y fotos aquí para comenzar su video.</div>
  <div class="t" style="left:173.9px;top:469.500px;font-size:13.500px;color:#5d5d63;letter-spacing:-0.14px">Separar</div>
  <div class="a" style="left:1184px;top:477px;width:100px;height:4px;border-radius:2px;background:#444448"></div>
  <div class="a" style="left:1184px;top:477px;width:72px;height:4px;border-radius:2px;background:#f2f2f4"></div>
  <div class="a" style="left:1250px;top:473px;width:12px;height:12px;border-radius:6px;border:1.800px solid #f4f4f6;background:#15151c"></div>
  <svg id="ticons" style="left:0;top:0" width="1328" height="700" viewBox="0 0 1328 700" fill="none" stroke="#58585d" stroke-width="1.300" stroke-linecap="round" stroke-linejoin="round">
    <g stroke="#46464c" stroke-width="1" stroke-linecap="butt">
      <path d="M163 530.500 H1266 M163 657.500 H1266" stroke-dasharray="5 5.200"/>
      <path d="M154.500 538 V651 M1273.500 538 V651" stroke-dasharray="2.700 2.450"/>
      <path d="M156.300 536.200 l3 -3 M1271.700 536.200 l-3 -3 M156.300 651.800 l3 3 M1271.700 651.800 l-3 3" stroke="#3c3c42"/>
    </g>
    <!-- undo / redo / trash -->
    <path d="M24 471.600 l-4 3.800 4 3.800 M20 475.400 h10.600 a4.400 4.400 0 0 1 0 8.800 h-4.600"/>
    <path d="M70 471.600 l4 3.800 -4 3.800 M74 475.400 h-10.600 a4.400 4.400 0 0 0 0 8.800 h4.600"/>
    <path d="M95.600 473.800 h16.800 M100.400 473.600 v-1.400 a1.400 1.400 0 0 1 1.400 -1.400 h4.400 a1.400 1.400 0 0 1 1.400 1.400 v1.400 M97.400 474 v11 a2.200 2.200 0 0 0 2.200 2.200 h8.800 a2.200 2.200 0 0 0 2.200 -2.200 v-11 M102.200 478 v5.200 M105.800 478 v5.200"/>
    <path d="M131.500 471.500 v15 M243.500 471.500 v15 M384.500 471.500 v15 M968.500 471.500 v15" stroke="#444449" stroke-width="1"/>
    <!-- scissors -->
    <path d="M152.400 471.600 l11.200 11 M165.600 471.600 l-11.200 11"/>
    <circle cx="154" cy="484" r="2.300"/><circle cx="164" cy="484" r="2.300"/>
    <!-- marker -->
    <path d="M267 471.600 h8 a1.600 1.600 0 0 1 1.600 1.600 v8.200 l-5.600 4.400 -5.600 -4.400 v-8.200 a1.600 1.600 0 0 1 1.600 -1.600z M268.400 475.600 h5.200 M268.400 478.400 h5.200" stroke="#55555a"/>
    <!-- T box -->
    <g stroke="#f1f1f3">
      <rect x="301.600" y="471.200" width="14.800" height="15.200" rx="3.600" stroke-width="1.500"/>
      <path d="M305.800 475.800 h6.400 M309 475.800 v6.600" stroke-width="1.900"/>
      <path d="M323.800 477.200 h5.400 l-2.700 4z" fill="#f1f1f3" stroke-width="0.600"/>
      <!-- cut lines -->
      <path d="M348 471.800 h17 M348 478.600 h5 M348 485.400 h3" stroke-width="1.300"/>
      <path d="M355.200 475 l8.200 7.600 M364.600 475 l-8.200 7.600" stroke-width="1.300"/>
      <circle cx="356" cy="484" r="1.800" stroke-width="1.200"/><circle cx="363.400" cy="484" r="1.800" stroke-width="1.200"/>
    </g>
    <!-- export to -->
    <path d="M406.400 475 h11.600 a2 2 0 0 1 2 2 v7 a2 2 0 0 1 -2 2 h-11.600 a2 2 0 0 1 -2 -2 v-7 a2 2 0 0 1 2 -2z M407 474.600 l0.800 -2.400 h8.800 l0.800 2.400 M412.200 483.400 v-5.400 M409.800 480.200 l2.400 -2.400 2.400 2.400" stroke="#505055"/>
    <!-- mic -->
    <g stroke="#ececee" stroke-width="1.400">
      <rect x="933.600" y="471.400" width="6.400" height="10.200" rx="3.200"/>
      <path d="M930.400 478 a6.500 6.500 0 0 0 13 0 M936.800 484.600 v2.200"/>
    </g>
    <!-- link -->
    <g stroke="#ececee" stroke-width="2.200">
      <path d="M998 476.200 h-3 a2.800 2.800 0 0 0 0 5.600 h3 M1002.200 476.200 h3 a2.800 2.800 0 0 1 0 5.600 h-3"/>
      <path d="M997.400 479 h5.400" stroke="#b8b8bc" stroke-width="1.600"/>
    </g>
    <!-- snap -->
    <rect x="1033.600" y="475.600" width="7.400" height="6.600" rx="2.200" fill="#ececee" stroke="none"/>
    <rect x="1042.600" y="475.600" width="7.400" height="6.600" rx="2.200" fill="#ececee" stroke="none"/>
    <path d="M1041.800 472.200 v2.600 M1039.400 472.600 l1.200 2 M1044.200 472.600 l-1.200 2 M1041.800 485.600 v-2.600 M1039.400 485.200 l1.200 -2 M1044.200 485.200 l-1.200 -2" stroke="#a8a8ac" stroke-width="0.900"/>
    <!-- split -->
    <g stroke="#ececee" stroke-width="1.400">
      <path d="M1081.400 475.200 h-3.200 a2.600 2.600 0 0 0 -2.600 2.600 v2.400 a2.600 2.600 0 0 0 2.600 2.600 h3.200 M1086.600 475.200 h3.200 a2.600 2.600 0 0 1 2.600 2.600 v2.400 a2.600 2.600 0 0 1 -2.600 2.600 h-3.200 M1084 472.400 v12"/>
      <!-- fit -->
      <rect x="1117.600" y="472.400" width="16.800" height="13" rx="4"/>
      <path d="M1121 479 h10 M1123.400 476.600 l-2.400 2.400 2.400 2.400 M1128.600 476.600 l2.400 2.400 -2.400 2.400" stroke-width="1.500"/>
    </g>
    <!-- zoom -->
    <g stroke="#ececee" stroke-width="1.200">
      <circle cx="1168" cy="478.900" r="7.600"/><circle cx="1300" cy="478.900" r="7.600"/>
      <path d="M1165.400 478.900 h5.200" stroke="#c4c4c8" stroke-width="1.500"/>
      <path d="M1297.200 478.900 h5.600 M1300 476.100 v5.600" stroke-width="1.500"/>
    </g>
    <!-- track icons -->
    <g stroke="#a9a9ad" stroke-width="1">
      <rect x="28.300" y="585.400" width="9.600" height="9.200" rx="1.800"/>
      <path d="M30.600 585.600 v8.800 M35.600 585.600 v8.800 M30.600 590 h5" stroke-width="1.400"/>
      <ellipse cx="59.500" cy="590" rx="4.800" ry="3.300"/>
      <circle cx="59.500" cy="590" r="1.300"/>
      <path d="M80 588 h2 l3.400 -2.800 v9.600 l-3.400 -2.800 h-2z M87.200 586.600 a4.600 4.600 0 0 1 0 6.800 M89 585.200 a6.400 6.400 0 0 1 0 9.600"/>
    </g>
  </svg>
</div>

<div class="a frame"></div>
</body>
</html>
